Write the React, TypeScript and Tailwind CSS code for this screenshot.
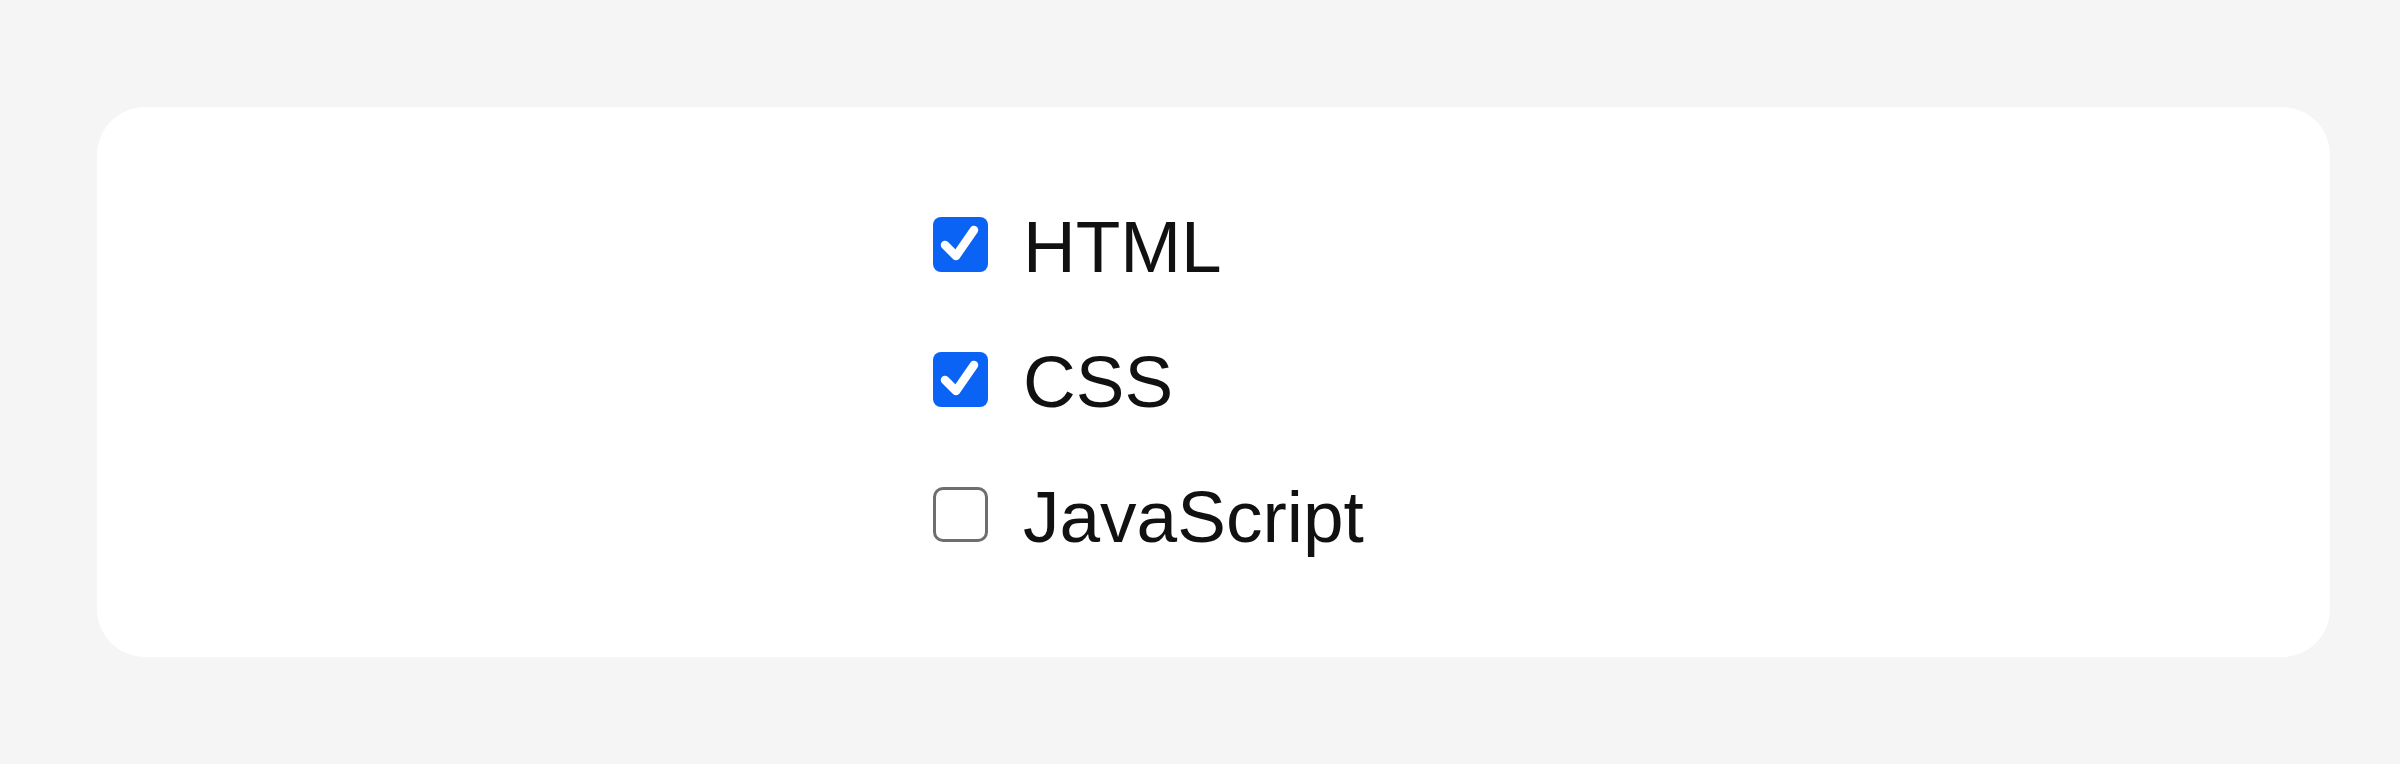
import { useState } from 'react';

interface Option {
  label: string;
  checked: boolean;
}

const initialOptions: Option[] = [
  { label: 'HTML', checked: true },
  { label: 'CSS', checked: true },
  { label: 'JavaScript', checked: false },
];

function Checkbox({ checked, onToggle }: { checked: boolean; onToggle: () => void }) {
  if (checked) {
    return (
      <button
        onClick={onToggle}
        className="w-[55px] h-[55px] rounded-[8px] bg-[#0b63f6] flex items-center justify-center shrink-0"
      >
        <svg width="55" height="55" viewBox="0 0 55 55" fill="none" className="block">
          <path d="M12 28 L23 39 L41 13" stroke="white" strokeWidth="8.5" strokeLinecap="round" strokeLinejoin="round" />
        </svg>
      </button>
    );
  }
  return (
    <button
      onClick={onToggle}
      className="w-[55px] h-[55px] rounded-[10px] border-[3px] border-[#6e6e6e] bg-white shrink-0"
    />
  );
}

export default function App() {
  const [options, setOptions] = useState(initialOptions);

  const toggle = (i: number) => {
    setOptions(options.map((o, idx) => (idx === i ? { ...o, checked: !o.checked } : o)));
  };

  return (
    <div className="min-h-[764px] bg-[#f5f5f5] pt-[107px] pl-[97px]">
      <div className="w-[2233px] h-[550px] bg-white rounded-[48px] pt-[70px] pl-[836px]">
        {options.map((o, i) => (
          <label key={o.label} className="h-[135px] flex items-center gap-[35px] cursor-pointer">
            <Checkbox checked={o.checked} onToggle={() => toggle(i)} />
            <span
              className="text-[73px] leading-none text-[#111] mt-[4px]"
              style={{ fontFamily: '"Liberation Sans", Arial, sans-serif' }}
            >
              {o.label}
            </span>
          </label>
        ))}
      </div>
    </div>
  );
}
